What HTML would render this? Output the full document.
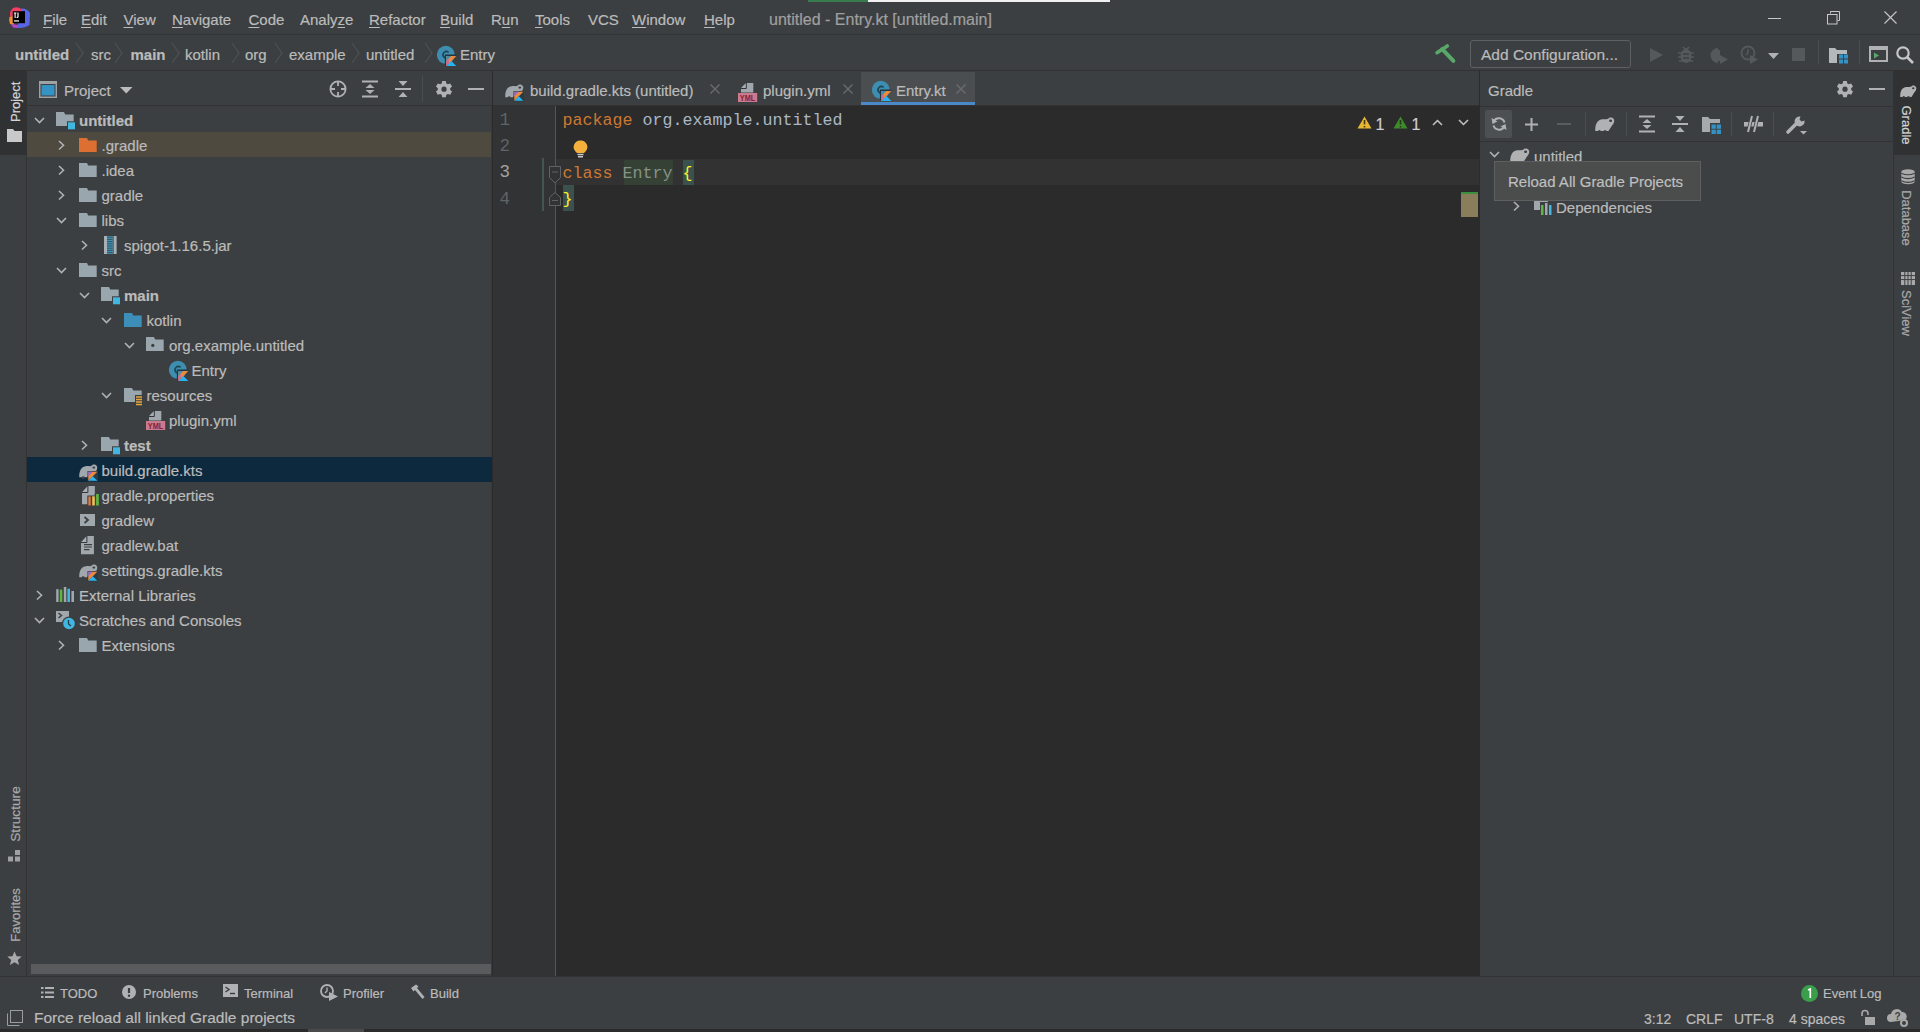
<!DOCTYPE html>
<html><head><meta charset="utf-8">
<style>
*{margin:0;padding:0;box-sizing:border-box}
html,body{width:1920px;height:1032px;overflow:hidden;background:#3c3f41;font-family:"Liberation Sans",sans-serif;font-size:15px;color:#bbbbbb}
.a{position:absolute}
.t{position:absolute;white-space:nowrap;line-height:20px;-webkit-text-stroke:0.2px currentColor}
.b{font-weight:bold}
u{text-decoration-thickness:1px;text-underline-offset:1.5px}
svg{position:absolute;overflow:visible}
.code{position:absolute;font-family:"Liberation Mono",monospace;font-size:16.67px;white-space:pre;line-height:26px}
</style></head><body>
<div class="a" style="left:808px;top:0px;width:60px;height:2px;background:#387b4f;"></div>
<div class="a" style="left:868px;top:0px;width:242px;height:2px;background:#f0f0f0;"></div>
<div class="a" style="left:0px;top:34px;width:1920px;height:1px;background:#323436;"></div>
<svg style="left:7px;top:6px" width="24" height="24" viewBox="0 0 24 24">
 <path d="M6 2 Q12 0 15 4 L13 11 L4 12 Q1 7 6 2Z" fill="#f43f63"/>
 <path d="M2.5 11 L7 10 L7 19 L3 18 Q1.5 14 2.5 11Z" fill="#f0913a"/>
 <path d="M4 18 L12 19 L10 22 L6 21.5Z" fill="#b745c9"/>
 <path d="M14 2.5 Q20 2 23 7 L22.5 19 Q18 22.5 10 22 L14 10Z" fill="#5866e6"/>
 <rect x="5.7" y="5.2" width="12.3" height="12" fill="#000"/>
 <rect x="7" y="14.3" width="5" height="1.3" fill="#e8e8e8"/>
 <path d="M6.8 6.5 h2.6 v1.1 h-0.75 v4.3 h-1.1 v-4.3 h-0.75z M10.4 6.5 h1.2 v3.9 c0 1.3 -0.9 1.7 -2 1.6 v-1.1 c0.6 0 0.8 -0.1 0.8 -0.6z" fill="#fff"/>
</svg>
<div class="t" style="left:43px;top:9.5px;"><u>F</u>ile</div>
<div class="t" style="left:81px;top:9.5px;"><u>E</u>dit</div>
<div class="t" style="left:123.5px;top:9.5px;"><u>V</u>iew</div>
<div class="t" style="left:172px;top:9.5px;"><u>N</u>avigate</div>
<div class="t" style="left:248.5px;top:9.5px;"><u>C</u>ode</div>
<div class="t" style="left:300px;top:9.5px;">Analy<u>z</u>e</div>
<div class="t" style="left:369px;top:9.5px;"><u>R</u>efactor</div>
<div class="t" style="left:440px;top:9.5px;"><u>B</u>uild</div>
<div class="t" style="left:491px;top:9.5px;">R<u>u</u>n</div>
<div class="t" style="left:535px;top:9.5px;"><u>T</u>ools</div>
<div class="t" style="left:588px;top:9.5px;">VCS</div>
<div class="t" style="left:632px;top:9.5px;"><u>W</u>indow</div>
<div class="t" style="left:704px;top:9.5px;"><u>H</u>elp</div>
<div class="t" style="left:769px;top:9.5px;color:#a0a0a0;font-size:16px">untitled - Entry.kt [untitled.main]</div>
<div class="a" style="left:1768px;top:18px;width:13px;height:1px;background:#c8c8c8;"></div>
<svg style="left:1827px;top:11px" width="13" height="14" viewBox="0 0 13 14"><path d="M3.5 2.5 v-2 h9 v9 h-2" fill="none" stroke="#c8c8c8"/><rect x="0.5" y="3.5" width="9.5" height="9.5" fill="none" stroke="#c8c8c8"/></svg>
<svg style="left:1884px;top:11px" width="13" height="13" viewBox="0 0 13 13"><path d="M0.5 0.5 L12.5 12.5 M12.5 0.5 L0.5 12.5" stroke="#c8c8c8" stroke-width="1.1"/></svg>
<div class="a" style="left:0px;top:70px;width:1920px;height:1px;background:#323232;"></div>
<div class="t b" style="left:15px;top:44.5px;">untitled</div>
<div class="t" style="left:91px;top:44.5px;">src</div>
<div class="t b" style="left:130.5px;top:44.5px;">main</div>
<div class="t" style="left:185px;top:44.5px;">kotlin</div>
<div class="t" style="left:245px;top:44.5px;">org</div>
<div class="t" style="left:289px;top:44.5px;">example</div>
<div class="t" style="left:366px;top:44.5px;">untitled</div>
<div class="t" style="left:460px;top:44.5px;">Entry</div>
<svg style="left:74.5px;top:42px" width="9" height="22" viewBox="0 0 9 22"><path d="M1 1 L8 11 L1 21" fill="none" stroke="#4d5052" stroke-width="1.3"/></svg>
<svg style="left:114px;top:42px" width="9" height="22" viewBox="0 0 9 22"><path d="M1 1 L8 11 L1 21" fill="none" stroke="#4d5052" stroke-width="1.3"/></svg>
<svg style="left:171px;top:42px" width="9" height="22" viewBox="0 0 9 22"><path d="M1 1 L8 11 L1 21" fill="none" stroke="#4d5052" stroke-width="1.3"/></svg>
<svg style="left:231px;top:42px" width="9" height="22" viewBox="0 0 9 22"><path d="M1 1 L8 11 L1 21" fill="none" stroke="#4d5052" stroke-width="1.3"/></svg>
<svg style="left:274px;top:42px" width="9" height="22" viewBox="0 0 9 22"><path d="M1 1 L8 11 L1 21" fill="none" stroke="#4d5052" stroke-width="1.3"/></svg>
<svg style="left:350.5px;top:42px" width="9" height="22" viewBox="0 0 9 22"><path d="M1 1 L8 11 L1 21" fill="none" stroke="#4d5052" stroke-width="1.3"/></svg>
<svg style="left:424px;top:42px" width="9" height="22" viewBox="0 0 9 22"><path d="M1 1 L8 11 L1 21" fill="none" stroke="#4d5052" stroke-width="1.3"/></svg>
<svg style="left:437px;top:47px" width="19" height="18" viewBox="0 0 19 18"><circle cx="8.8" cy="7.8" r="9" fill="#3d8eb0"/>
<path d="M11.6 5.4 A3.3 3.3 0 1 0 11.6 10.2" fill="none" stroke="#1f4656" stroke-width="1.6"/>
<path d="M8.6 18.6 V8.2 H19.4" fill="none" stroke="#24343e" stroke-width="1.4"/>
<path d="M9.3 8.9 h10 L9.3 18.9z" fill="#f08a3a"/>
<path d="M9.3 8.9 h5 L9.3 13.9z" fill="#3d8eb0"/>
<path d="M9.3 18.9 L14.3 13.9 L19.3 18.9z" fill="#28b4ef"/>
<path d="M9.3 13.9 L11.8 11.4 L11.8 16.4 L9.3 18.9z" fill="#c86a9a"/></svg>
<svg style="left:1435px;top:44px" width="21" height="20" viewBox="0 0 21 20"><path d="M2 8.7 L12.3 1.9" stroke="#59a869" stroke-width="3.6" stroke-linecap="round"/><path d="M7.2 5.2 L18.4 16.8" stroke="#59a869" stroke-width="4" stroke-linecap="round"/></svg>
<div class="a" style="left:1470px;top:40px;width:161px;height:28px;background:transparent;border:1px solid #5e6162;border-radius:3px"></div>
<div class="t" style="left:1481px;top:45px;font-size:15.5px">Add Configuration...</div>
<svg style="left:1649px;top:47px" width="15" height="16" viewBox="0 0 15 16"><path d="M1 1 L14 8 L1 15Z" fill="#56595b"/></svg>
<svg style="left:1677px;top:44px" width="18" height="20" viewBox="0 0 18 20"><path d="M6 3 L8 5 L10 5 L12 3" stroke="#56595b" stroke-width="1.5" fill="none"/><ellipse cx="9" cy="12" rx="5.5" ry="7" fill="#56595b"/><path d="M1 9 h16 M1 13 h16 M2 17 h14" stroke="#56595b" stroke-width="1.5"/><path d="M6 10 h6 M6 14 h6" stroke="#3c3f41" stroke-width="1.4"/></svg>
<svg style="left:1710px;top:47px" width="19" height="17" viewBox="0 0 19 17"><path d="M8 1 A7.5 7.5 0 1 0 8 16Z" fill="#56595b"/><path d="M9 3 L9 14" stroke="#56595b" stroke-width="2"/><path d="M10 8 L18 12.5 L10 17Z" fill="#56595b"/></svg>
<svg style="left:1740px;top:45px" width="19" height="19" viewBox="0 0 19 19"><circle cx="8" cy="8" r="6.5" fill="none" stroke="#56595b" stroke-width="1.8"/><path d="M8 4 v4 l-2 2" stroke="#56595b" stroke-width="1.5" fill="none"/><path d="M10 10 L18 14.5 L10 19Z" fill="#56595b"/></svg>
<svg style="left:1767.5px;top:52.5px" width="11" height="6" viewBox="0 0 11 6"><path d="M0 0 h11 L5.5 6z" fill="#afb1b3"/></svg>
<div class="a" style="left:1792px;top:48px;width:13px;height:13px;background:#56595b;"></div>
<div class="a" style="left:1818px;top:40px;width:1px;height:24px;background:#4b4e50;"></div>
<svg style="left:1829px;top:48px" width="20" height="16" viewBox="0 0 20 16"><path d="M0 0 h6 l2 2 h10 v13 h-18z" fill="#b4b8bb"/><rect x="8" y="6" width="12" height="10" fill="#3c3f41"/><rect x="10" y="6.5" width="4" height="4" fill="#3592c4"/><rect x="15" y="6.5" width="4" height="4" fill="#3592c4"/><rect x="10" y="11.5" width="4" height="4" fill="#3592c4"/><rect x="15" y="11.5" width="4" height="4" fill="#3592c4"/></svg>
<div class="a" style="left:1859px;top:40px;width:1px;height:24px;background:#4b4e50;"></div>
<svg style="left:1869px;top:46px" width="19" height="16" viewBox="0 0 19 16"><rect x="1" y="1" width="17" height="14" fill="none" stroke="#afb1b3" stroke-width="2"/><rect x="1" y="1" width="17" height="3" fill="#afb1b3"/><path d="M5 6.5 L10 9.5 L5 12.5z" fill="#59a869"/></svg>
<svg style="left:1896px;top:46px" width="18" height="18" viewBox="0 0 18 18"><circle cx="7" cy="7" r="5.7" fill="none" stroke="#c4c6c8" stroke-width="2.2"/><path d="M11 11 L17 17" stroke="#c4c6c8" stroke-width="2.6"/></svg>
<div class="a" style="left:0px;top:71px;width:26px;height:84px;background:#2f3133;"></div>
<div class="a" style="left:26px;top:71px;width:1px;height:905px;background:#323232;"></div>
<div class="t" style="left:-4px;top:92px;width:40px;height:20px;transform:rotate(-90deg);font-size:13px;color:#d4d4d4;text-align:center">Project</div>
<svg style="left:7px;top:129px" width="15" height="13" viewBox="0 0 15 13"><path d="M0 0 h6 l1.5 2 h7.5 v11 h-15z" fill="#c9c9c9"/></svg>
<div class="t" style="left:-19px;top:804px;width:70px;height:20px;transform:rotate(-90deg);font-size:13.7px;color:#a9a9a9;text-align:center">Structure</div>
<svg style="left:8px;top:850px" width="13" height="12" viewBox="0 0 13 12"><rect x="7" y="0" width="5" height="5" fill="#a0a0a0"/><rect x="0" y="6.5" width="5" height="5" fill="#a0a0a0"/><rect x="7" y="6.5" width="5" height="5" fill="#a0a0a0"/></svg>
<div class="t" style="left:-19px;top:905px;width:70px;height:20px;transform:rotate(-90deg);font-size:13px;color:#a9a9a9;text-align:center">Favorites</div>
<svg style="left:7px;top:951px" width="15" height="15" viewBox="0 0 15 15"><path d="M7.5 0.5 L9.6 5.3 L14.7 5.6 L10.8 8.9 L12.1 14 L7.5 11.2 L2.9 14 L4.2 8.9 L0.3 5.6 L5.4 5.3Z" fill="#a9a9a9"/></svg>
<div class="a" style="left:27px;top:105px;width:465px;height:1px;background:#323232;"></div>
<svg style="left:39px;top:81px" width="18" height="17" viewBox="0 0 18 17"><rect x="0.75" y="0.75" width="16.5" height="15.5" fill="none" stroke="#9ea2a5" stroke-width="1.5"/><rect x="0" y="0" width="18" height="3" fill="#9ea2a5"/><rect x="2.5" y="4" width="13" height="10.5" fill="#3592c4"/></svg>
<div class="t" style="left:64px;top:80.5px;">Project</div>
<svg style="left:120px;top:87px" width="13" height="7" viewBox="0 0 13 7"><path d="M0 0 h12.5 L6.25 6.5z" fill="#bbbbbb"/></svg>
<svg style="left:329px;top:80px" width="18" height="18" viewBox="0 0 18 18"><circle cx="9" cy="9" r="7.6" fill="none" stroke="#afb1b3" stroke-width="1.8"/><path d="M9 1 v5 M9 12 v5 M1 9 h5 M12 9 h5" stroke="#afb1b3" stroke-width="1.8"/></svg>
<svg style="left:362px;top:80px" width="16" height="18" viewBox="0 0 16 18"><rect x="0" y="0.5" width="16" height="2" fill="#afb1b3"/><rect x="0" y="15.5" width="16" height="2" fill="#afb1b3"/><path d="M3.5 8 L8 4 L12.5 8z M3.5 10 L8 14 L12.5 10z" fill="#afb1b3"/></svg>
<svg style="left:395px;top:80px" width="16" height="18" viewBox="0 0 16 18"><rect x="0" y="8" width="16" height="2" fill="#afb1b3"/><path d="M3.5 1 L8 6 L12.5 1z M3.5 17 L8 12 L12.5 17z" fill="#afb1b3"/></svg>
<div class="a" style="left:422px;top:76px;width:1px;height:26px;background:#4b4e50;"></div>
<svg style="left:435px;top:80.5px" width="18" height="17" viewBox="0 0 18 17"><path d="M7.2 0 h3.6 l0.5 2.4 l1.6 0.9 l2.3 -0.8 l1.8 3.1 l-1.8 1.6 v1.8 l1.8 1.6 l-1.8 3.1 l-2.3 -0.8 l-1.6 0.9 l-0.5 2.4 h-3.6 l-0.5 -2.4 l-1.6 -0.9 l-2.3 0.8 l-1.8 -3.1 l1.8 -1.6 v-1.8 l-1.8 -1.6 l1.8 -3.1 l2.3 0.8 l1.6 -0.9z" fill="#afb1b3"/><circle cx="9" cy="8.2" r="2.6" fill="#3c3f41"/></svg>
<div class="a" style="left:468px;top:88px;width:16px;height:2px;background:#afb1b3;"></div>
<div class="a" style="left:491px;top:106px;width:1px;height:870px;background:#37393b;"></div>
<svg style="left:33.5px;top:117px" width="11" height="7" viewBox="0 0 11 7"><path d="M1 1 L5.5 5.5 L10 1" fill="none" stroke="#afb1b3" stroke-width="1.6"/></svg>
<svg style="left:56.0px;top:112px" width="20" height="20" viewBox="0 0 20 20"><path d="M0 0 h8 l1.2 2.6 h8.5 v11.4 h-17.7z" fill="#9aa6ae"/><rect x="11" y="9.3" width="8.5" height="8.5" fill="#3c3f41"/><rect x="12" y="10.3" width="7" height="7" fill="#40b6e0"/></svg>
<div class="t b" style="left:79.0px;top:111px;">untitled</div>
<div class="a" style="left:27px;top:132px;width:464px;height:25px;background:#4f4a40;"></div>
<svg style="left:58.25px;top:139.5px" width="7" height="11" viewBox="0 0 7 11"><path d="M1 1 L5.5 5.25 L1 9.5" fill="none" stroke="#afb1b3" stroke-width="1.6"/></svg>
<svg style="left:78.5px;top:137.5px" width="20" height="20" viewBox="0 0 20 20"><path d="M0 0 h8 l1.2 2.6 h8.5 v11.4 h-17.7z" fill="#dd6f33"/></svg>
<div class="t" style="left:101.5px;top:136px;">.gradle</div>
<svg style="left:58.25px;top:164.5px" width="7" height="11" viewBox="0 0 7 11"><path d="M1 1 L5.5 5.25 L1 9.5" fill="none" stroke="#afb1b3" stroke-width="1.6"/></svg>
<svg style="left:78.5px;top:162.5px" width="20" height="20" viewBox="0 0 20 20"><path d="M0 0 h8 l1.2 2.6 h8.5 v11.4 h-17.7z" fill="#9aa6ae"/></svg>
<div class="t" style="left:101.5px;top:161px;">.idea</div>
<svg style="left:58.25px;top:189.5px" width="7" height="11" viewBox="0 0 7 11"><path d="M1 1 L5.5 5.25 L1 9.5" fill="none" stroke="#afb1b3" stroke-width="1.6"/></svg>
<svg style="left:78.5px;top:187.5px" width="20" height="20" viewBox="0 0 20 20"><path d="M0 0 h8 l1.2 2.6 h8.5 v11.4 h-17.7z" fill="#9aa6ae"/></svg>
<div class="t" style="left:101.5px;top:186px;">gradle</div>
<svg style="left:56.0px;top:217px" width="11" height="7" viewBox="0 0 11 7"><path d="M1 1 L5.5 5.5 L10 1" fill="none" stroke="#afb1b3" stroke-width="1.6"/></svg>
<svg style="left:78.5px;top:212.5px" width="20" height="20" viewBox="0 0 20 20"><path d="M0 0 h8 l1.2 2.6 h8.5 v11.4 h-17.7z" fill="#9aa6ae"/></svg>
<div class="t" style="left:101.5px;top:211px;">libs</div>
<svg style="left:80.75px;top:239.5px" width="7" height="11" viewBox="0 0 7 11"><path d="M1 1 L5.5 5.25 L1 9.5" fill="none" stroke="#afb1b3" stroke-width="1.6"/></svg>
<svg style="left:103.5px;top:235.5px" width="20" height="20" viewBox="0 0 20 20"><rect x="0" y="0" width="8.5" height="18" fill="#a8b0b5"/><rect x="3" y="0" width="5.5" height="18" fill="#3f92b4"/><path d="M3 1.2 h5.5 M3 3.4 h5.5 M3 5.6 h5.5 M3 7.8 h5.5 M3 10.0 h5.5 M3 12.2 h5.5 M3 14.4 h5.5 M3 16.6 h5.5" stroke="#2f4550" stroke-width="0.8"/><rect x="9.6" y="0" width="3" height="18" fill="#a8b0b5"/></svg>
<div class="t" style="left:124.0px;top:236px;">spigot-1.16.5.jar</div>
<svg style="left:56.0px;top:267px" width="11" height="7" viewBox="0 0 11 7"><path d="M1 1 L5.5 5.5 L10 1" fill="none" stroke="#afb1b3" stroke-width="1.6"/></svg>
<svg style="left:78.5px;top:262.5px" width="20" height="20" viewBox="0 0 20 20"><path d="M0 0 h8 l1.2 2.6 h8.5 v11.4 h-17.7z" fill="#9aa6ae"/></svg>
<div class="t" style="left:101.5px;top:261px;">src</div>
<svg style="left:78.5px;top:292px" width="11" height="7" viewBox="0 0 11 7"><path d="M1 1 L5.5 5.5 L10 1" fill="none" stroke="#afb1b3" stroke-width="1.6"/></svg>
<svg style="left:101.0px;top:287px" width="20" height="20" viewBox="0 0 20 20"><path d="M0 0 h8 l1.2 2.6 h8.5 v11.4 h-17.7z" fill="#9aa6ae"/><rect x="11" y="9.3" width="8.5" height="8.5" fill="#3c3f41"/><rect x="12" y="10.3" width="7" height="7" fill="#40b6e0"/></svg>
<div class="t b" style="left:124.0px;top:286px;">main</div>
<svg style="left:101.0px;top:317px" width="11" height="7" viewBox="0 0 11 7"><path d="M1 1 L5.5 5.5 L10 1" fill="none" stroke="#afb1b3" stroke-width="1.6"/></svg>
<svg style="left:123.5px;top:312.5px" width="20" height="20" viewBox="0 0 20 20"><path d="M0 0 h8 l1.2 2.6 h8.5 v11.4 h-17.7z" fill="#3d8fba"/></svg>
<div class="t" style="left:146.5px;top:311px;">kotlin</div>
<svg style="left:123.5px;top:342px" width="11" height="7" viewBox="0 0 11 7"><path d="M1 1 L5.5 5.5 L10 1" fill="none" stroke="#afb1b3" stroke-width="1.6"/></svg>
<svg style="left:146.0px;top:337.3px" width="20" height="20" viewBox="0 0 20 20"><path d="M0 0 h8 l1.2 2.6 h8.5 v11.4 h-17.7z" fill="#9aa6ae"/><circle cx="6.8" cy="8.4" r="1.6" fill="#3c3f41"/></svg>
<div class="t" style="left:169.0px;top:336px;">org.example.untitled</div>
<svg style="left:168.5px;top:361.5px" width="20" height="20" viewBox="0 0 20 20"><circle cx="8.8" cy="7.8" r="9" fill="#3d8eb0"/>
<path d="M11.6 5.4 A3.3 3.3 0 1 0 11.6 10.2" fill="none" stroke="#1f4656" stroke-width="1.6"/>
<path d="M8.6 18.6 V8.2 H19.4" fill="none" stroke="#24343e" stroke-width="1.4"/>
<path d="M9.3 8.9 h10 L9.3 18.9z" fill="#f08a3a"/>
<path d="M9.3 8.9 h5 L9.3 13.9z" fill="#3d8eb0"/>
<path d="M9.3 18.9 L14.3 13.9 L19.3 18.9z" fill="#28b4ef"/>
<path d="M9.3 13.9 L11.8 11.4 L11.8 16.4 L9.3 18.9z" fill="#c86a9a"/></svg>
<div class="t" style="left:191.5px;top:361px;">Entry</div>
<svg style="left:101.0px;top:392px" width="11" height="7" viewBox="0 0 11 7"><path d="M1 1 L5.5 5.5 L10 1" fill="none" stroke="#afb1b3" stroke-width="1.6"/></svg>
<svg style="left:123.5px;top:387.5px" width="20" height="20" viewBox="0 0 20 20"><path d="M0 0 h8 l1.2 2.6 h8.5 v11.4 h-17.7z" fill="#9aa6ae"/><rect x="11" y="7" width="8" height="10" fill="#3c3f41"/><path d="M12 9 h6 M12 11.5 h6 M12 14 h6 M12 16.5 h6" stroke="#e6a93d" stroke-width="1.4"/></svg>
<div class="t" style="left:146.5px;top:386px;">resources</div>
<svg style="left:149.0px;top:411px" width="20" height="20" viewBox="0 0 20 20"><path d="M5 0 H12.3 V9.5 H0 V5.2 Z" fill="#a0a8ae"/><path d="M0.4 4.8 L4.8 0.4 V4.8 Z" fill="#a9b0b5"/><path d="M5.3 -0.5 V5.5 H0" fill="none" stroke="#33363a"/><rect x="-3" y="10" width="19.2" height="9" fill="#cc7a8b"/><text x="6.6" y="17.8" font-family="Liberation Sans" font-size="9" font-weight="bold" fill="#86203a" text-anchor="middle" textLength="15.5" lengthAdjust="spacingAndGlyphs">YML</text></svg>
<div class="t" style="left:169.0px;top:411px;">plugin.yml</div>
<svg style="left:80.75px;top:439.5px" width="7" height="11" viewBox="0 0 7 11"><path d="M1 1 L5.5 5.25 L1 9.5" fill="none" stroke="#afb1b3" stroke-width="1.6"/></svg>
<svg style="left:101.0px;top:437px" width="20" height="20" viewBox="0 0 20 20"><path d="M0 0 h8 l1.2 2.6 h8.5 v11.4 h-17.7z" fill="#9aa6ae"/><rect x="11" y="9.3" width="8.5" height="8.5" fill="#3c3f41"/><rect x="12" y="10.3" width="7" height="7" fill="#40b6e0"/></svg>
<div class="t b" style="left:124.0px;top:436px;">test</div>
<div class="a" style="left:27px;top:457px;width:465px;height:25px;background:#0d293e;"></div>
<svg style="left:78.5px;top:462.5px" width="20" height="20" viewBox="0 0 20 20"><g transform="translate(0,1) scale(0.95)"><path d="M0.3 14 C0 9 1.5 3 7 2.3 C10 2 12 2.6 13.2 1.8 C14.2 0.3 17.5 -0.3 19 2.5 C19.8 4.5 18.5 7 17 8.5 L13.5 14 Z" fill="#a0a8ae"/><ellipse cx="15.6" cy="3.7" rx="1.5" ry="1.2" fill="#3c3f41"/><circle cx="4.4" cy="14.5" r="1.5" fill="#3c3f41"/><circle cx="10" cy="14.5" r="1.5" fill="#3c3f41"/></g><rect x="8.5" y="8" width="10.5" height="10.5" fill="#2b3a44"/><path d="M9.3 8.8 h9 L9.3 17.8z" fill="#f08a3a"/><path d="M9.3 8.8 h4.5 L9.3 13.3z" fill="#8b6cd8"/><path d="M9.3 17.8 L13.8 13.3 L18.3 17.8z" fill="#28b4ef"/></svg>
<div class="t" style="left:101.5px;top:461px;">build.gradle.kts</div>
<svg style="left:81.5px;top:485.5px" width="20" height="20" viewBox="0 0 20 20"><path d="M6 0 H12.9 V18.3 H0 V6.5 Z" fill="#a0a8ae"/><path d="M0.4 6 L5.4 0.6 V6 Z" fill="#a9b0b5"/><path d="M5.9 0 V6.5 H0" fill="none" stroke="#33363a" stroke-width="1"/><rect x="5.3" y="9.5" width="12.8" height="10" fill="#3c3f41"/><rect x="6.4" y="10.5" width="2.3" height="9" fill="#e97a3b"/><rect x="10.2" y="10.3" width="2.6" height="9.2" fill="#eec050"/><rect x="14.1" y="8" width="2.7" height="11.5" fill="#62b543"/><path d="M13.3 8 V9.5" stroke="#3c3f41" stroke-width="1.5"/></svg>
<div class="t" style="left:101.5px;top:486px;">gradle.properties</div>
<svg style="left:80.0px;top:514px" width="20" height="20" viewBox="0 0 20 20"><rect x="0" y="0" width="15" height="12" fill="#a0a8ae"/><path d="M4.5 3 L8 6 L4.5 9" fill="none" stroke="#3c3f41" stroke-width="1.8"/></svg>
<div class="t" style="left:101.5px;top:511px;">gradlew</div>
<svg style="left:80.8px;top:535.9px" width="20" height="20" viewBox="0 0 20 20"><path d="M6 0 H12.9 V18.3 H0 V6.5 Z" fill="#a0a8ae"/><path d="M0.4 6 L5.4 0.6 V6 Z" fill="#a9b0b5"/><path d="M5.9 0 V6.5 H0" fill="none" stroke="#33363a" stroke-width="1"/><path d="M3 8.6 h8 M3 11 h8 M3 13.6 h5.5" stroke="#3c3f41" stroke-width="1.1"/></svg>
<div class="t" style="left:101.5px;top:536px;">gradlew.bat</div>
<svg style="left:78.5px;top:562.5px" width="20" height="20" viewBox="0 0 20 20"><g transform="translate(0,1) scale(0.95)"><path d="M0.3 14 C0 9 1.5 3 7 2.3 C10 2 12 2.6 13.2 1.8 C14.2 0.3 17.5 -0.3 19 2.5 C19.8 4.5 18.5 7 17 8.5 L13.5 14 Z" fill="#a0a8ae"/><ellipse cx="15.6" cy="3.7" rx="1.5" ry="1.2" fill="#3c3f41"/><circle cx="4.4" cy="14.5" r="1.5" fill="#3c3f41"/><circle cx="10" cy="14.5" r="1.5" fill="#3c3f41"/></g><rect x="8.5" y="8" width="10.5" height="10.5" fill="#2b3a44"/><path d="M9.3 8.8 h9 L9.3 17.8z" fill="#f08a3a"/><path d="M9.3 8.8 h4.5 L9.3 13.3z" fill="#8b6cd8"/><path d="M9.3 17.8 L13.8 13.3 L18.3 17.8z" fill="#28b4ef"/></svg>
<div class="t" style="left:101.5px;top:561px;">settings.gradle.kts</div>
<svg style="left:35.75px;top:589.5px" width="7" height="11" viewBox="0 0 7 11"><path d="M1 1 L5.5 5.25 L1 9.5" fill="none" stroke="#afb1b3" stroke-width="1.6"/></svg>
<svg style="left:56.0px;top:586.5px" width="20" height="20" viewBox="0 0 20 20"><rect x="0.2" y="2.2" width="2.4" height="12.8" fill="#a0a8ae"/><rect x="3.8" y="2.6" width="2.5" height="12.4" fill="#62b543"/><rect x="7.8" y="0" width="2.5" height="15" fill="#a0a8ae"/><rect x="11.4" y="1.8" width="2.6" height="13.2" fill="#40b6e0"/><rect x="15.4" y="4" width="2.6" height="11" fill="#a0a8ae"/></svg>
<div class="t" style="left:79.0px;top:586px;">External Libraries</div>
<svg style="left:33.5px;top:617px" width="11" height="7" viewBox="0 0 11 7"><path d="M1 1 L5.5 5.5 L10 1" fill="none" stroke="#afb1b3" stroke-width="1.6"/></svg>
<svg style="left:56.0px;top:611px" width="20" height="20" viewBox="0 0 20 20"><rect x="0" y="0" width="13" height="11" fill="#a0a8ae"/><path d="M2.5 2 L5.5 4.5 L2.5 7" fill="none" stroke="#3c3f41" stroke-width="1.5"/><circle cx="13" cy="12.5" r="7" fill="#3c3f41"/><circle cx="13" cy="12.5" r="5.8" fill="#40b6e0"/><path d="M12.5 9 v4 l2.5 2" fill="none" stroke="#1d3f4f" stroke-width="1.3"/></svg>
<div class="t" style="left:79.0px;top:611px;">Scratches and Consoles</div>
<svg style="left:58.25px;top:639.5px" width="7" height="11" viewBox="0 0 7 11"><path d="M1 1 L5.5 5.25 L1 9.5" fill="none" stroke="#afb1b3" stroke-width="1.6"/></svg>
<svg style="left:78.5px;top:637.5px" width="20" height="20" viewBox="0 0 20 20"><path d="M0 0 h8 l1.2 2.6 h8.5 v11.4 h-17.7z" fill="#9aa6ae"/></svg>
<div class="t" style="left:101.5px;top:636px;">Extensions</div>
<div class="a" style="left:31px;top:964px;width:460px;height:10px;background:#595b5d;"></div>
<div class="a" style="left:492px;top:71px;width:1px;height:905px;background:#2b2b2b;"></div>
<div class="a" style="left:861px;top:72px;width:114px;height:34px;background:#4b4e50;"></div>
<div class="a" style="left:861px;top:102px;width:114px;height:4px;background:#4a88c7;"></div>
<svg style="left:504.5px;top:82.5px" width="20" height="20" viewBox="0 0 20 20"><g transform="translate(0,1) scale(0.95)"><path d="M0.3 14 C0 9 1.5 3 7 2.3 C10 2 12 2.6 13.2 1.8 C14.2 0.3 17.5 -0.3 19 2.5 C19.8 4.5 18.5 7 17 8.5 L13.5 14 Z" fill="#a0a8ae"/><ellipse cx="15.6" cy="3.7" rx="1.5" ry="1.2" fill="#3c3f41"/><circle cx="4.4" cy="14.5" r="1.5" fill="#3c3f41"/><circle cx="10" cy="14.5" r="1.5" fill="#3c3f41"/></g><rect x="8.5" y="8" width="10.5" height="10.5" fill="#2b3a44"/><path d="M9.3 8.8 h9 L9.3 17.8z" fill="#f08a3a"/><path d="M9.3 8.8 h4.5 L9.3 13.3z" fill="#8b6cd8"/><path d="M9.3 17.8 L13.8 13.3 L18.3 17.8z" fill="#28b4ef"/></svg>
<div class="t" style="left:530px;top:80.5px;">build.gradle.kts (untitled)</div>
<svg style="left:709.5px;top:84px" width="10" height="10" viewBox="0 0 10 10"><path d="M0.5 0.5 L9.5 9.5 M9.5 0.5 L0.5 9.5" stroke="#6a6c6e" stroke-width="1.3"/></svg>
<svg style="left:741px;top:83px" width="20" height="20" viewBox="0 0 20 20"><path d="M5 0 H12.3 V9.5 H0 V5.2 Z" fill="#a0a8ae"/><path d="M0.4 4.8 L4.8 0.4 V4.8 Z" fill="#a9b0b5"/><path d="M5.3 -0.5 V5.5 H0" fill="none" stroke="#33363a"/><rect x="-3" y="10" width="19.2" height="9" fill="#cc7a8b"/><text x="6.6" y="17.8" font-family="Liberation Sans" font-size="9" font-weight="bold" fill="#86203a" text-anchor="middle" textLength="15.5" lengthAdjust="spacingAndGlyphs">YML</text></svg>
<div class="t" style="left:763px;top:80.5px;">plugin.yml</div>
<svg style="left:843px;top:84px" width="10" height="10" viewBox="0 0 10 10"><path d="M0.5 0.5 L9.5 9.5 M9.5 0.5 L0.5 9.5" stroke="#6a6c6e" stroke-width="1.3"/></svg>
<svg style="left:872px;top:82px" width="20" height="20" viewBox="0 0 20 20"><circle cx="8.8" cy="7.8" r="9" fill="#3d8eb0"/>
<path d="M11.6 5.4 A3.3 3.3 0 1 0 11.6 10.2" fill="none" stroke="#1f4656" stroke-width="1.6"/>
<path d="M8.6 18.6 V8.2 H19.4" fill="none" stroke="#24343e" stroke-width="1.4"/>
<path d="M9.3 8.9 h10 L9.3 18.9z" fill="#f08a3a"/>
<path d="M9.3 8.9 h5 L9.3 13.9z" fill="#3d8eb0"/>
<path d="M9.3 18.9 L14.3 13.9 L19.3 18.9z" fill="#28b4ef"/>
<path d="M9.3 13.9 L11.8 11.4 L11.8 16.4 L9.3 18.9z" fill="#c86a9a"/></svg>
<div class="t" style="left:896px;top:80.5px;">Entry.kt</div>
<svg style="left:955.5px;top:84px" width="10" height="10" viewBox="0 0 10 10"><path d="M0.5 0.5 L9.5 9.5 M9.5 0.5 L0.5 9.5" stroke="#6a6c6e" stroke-width="1.3"/></svg>
<div class="a" style="left:493px;top:105px;width:986px;height:1px;background:#323232;"></div>
<div class="a" style="left:493px;top:106px;width:986px;height:870px;background:#2b2b2b;"></div>
<div class="a" style="left:493px;top:106px;width:62px;height:870px;background:#313335;"></div>
<div class="a" style="left:555px;top:106px;width:1px;height:870px;background:#555555;"></div>
<div class="a" style="left:556px;top:158.5px;width:923px;height:26.5px;background:#323232;"></div>
<div class="a" style="left:493px;top:158.5px;width:62px;height:26.5px;background:#313335;"></div>
<div class="a" style="left:542px;top:158px;width:2px;height:53px;background:#45554f;"></div>
<div class="code" style="left:499.5px;top:106.5px;color:#606366;font-size:17.5px">1</div>
<div class="code" style="left:499.5px;top:132.9px;color:#606366;font-size:17.5px">2</div>
<div class="code" style="left:499.5px;top:159.3px;color:#a4a3a3;font-size:17.5px">3</div>
<div class="code" style="left:499.5px;top:185.7px;color:#606366;font-size:17.5px">4</div>
<div class="code" style="left:562.5px;top:108px"><span style="color:#cc7832">package</span> <span style="color:#a9b7c6">org.example.untitled</span></div>
<div class="a" style="left:623.5px;top:159.5px;width:49.5px;height:25px;background:#344134;"></div>
<div class="a" style="left:682.5px;top:159.5px;width:11px;height:25px;background:#3b514d;"></div>
<div class="a" style="left:563px;top:185px;width:10.5px;height:26px;background:#3b514d;"></div>
<div class="code" style="left:562.5px;top:160.5px"><span style="color:#cc7832">class</span> <span style="color:#879287">Entry</span> <span style="color:#ffef28">{</span></div>
<div class="code" style="left:562.5px;top:187px"><span style="color:#ffef28">}</span></div>
<svg style="left:549px;top:166px" width="13" height="18" viewBox="0 0 13 18"><path d="M0.5 0.5 h11 v11 L6 17 L0.5 11.5z" fill="#313335" stroke="#606366"/><path d="M3 6 h6" stroke="#606366"/></svg>
<svg style="left:549px;top:192px" width="13" height="14" viewBox="0 0 13 14"><path d="M0.5 13.5 h11 v-8 L6 0.5 L0.5 5.5z" fill="#313335" stroke="#606366"/><path d="M3 8.5 h6" stroke="#606366"/></svg>
<svg style="left:573px;top:140px" width="15" height="18" viewBox="0 0 15 18"><path d="M7.5 0.5 A6.5 6.5 0 0 1 12.5 11.5 L11 13 h-7 L2.5 11.5 A6.5 6.5 0 0 1 7.5 0.5z" fill="#f4af3d"/><path d="M4.5 14.5 h6 M5 16.8 h5" stroke="#c9c9c9" stroke-width="1.4"/></svg>
<svg style="left:1356.5px;top:115.5px" width="15" height="14" viewBox="0 0 15 14"><path d="M7.5 0.5 L14.5 12.5 H0.5z" fill="#e6b731"/><path d="M7.5 4 v4.5 M7.5 10 v1.5" stroke="#4a3a10" stroke-width="1.6"/></svg>
<div class="t" style="left:1375.5px;top:114.5px;font-size:16px;color:#d0d0d0">1</div>
<svg style="left:1392.5px;top:115.5px" width="15" height="14" viewBox="0 0 15 14"><path d="M7.5 0.5 L14.5 12.5 H0.5z" fill="#3f8a2c"/><path d="M7.5 4 v4.5 M7.5 10 v1.5" stroke="#1e3d17" stroke-width="1.6"/></svg>
<div class="t" style="left:1411.5px;top:114.5px;font-size:16px;color:#d0d0d0">1</div>
<svg style="left:1432px;top:119px" width="11" height="7" viewBox="0 0 11 7"><path d="M1 6 L5.5 1.5 L10 6" fill="none" stroke="#c4c4c4" stroke-width="1.5"/></svg>
<svg style="left:1458px;top:119px" width="11" height="7" viewBox="0 0 11 7"><path d="M1 1 L5.5 5.5 L10 1" fill="none" stroke="#c4c4c4" stroke-width="1.5"/></svg>
<div class="a" style="left:1461px;top:192px;width:17px;height:2px;background:#3c8f3c;"></div>
<div class="a" style="left:1461px;top:194px;width:17px;height:23px;background:#8a7d5c;"></div>
<div class="a" style="left:1479px;top:71px;width:1px;height:905px;background:#2b2b2b;"></div>
<div class="t" style="left:1488px;top:80.5px;">Gradle</div>
<svg style="left:1836px;top:80.5px" width="18" height="17" viewBox="0 0 18 17"><path d="M7.2 0 h3.6 l0.5 2.4 l1.6 0.9 l2.3 -0.8 l1.8 3.1 l-1.8 1.6 v1.8 l1.8 1.6 l-1.8 3.1 l-2.3 -0.8 l-1.6 0.9 l-0.5 2.4 h-3.6 l-0.5 -2.4 l-1.6 -0.9 l-2.3 0.8 l-1.8 -3.1 l1.8 -1.6 v-1.8 l-1.8 -1.6 l1.8 -3.1 l2.3 0.8 l1.6 -0.9z" fill="#afb1b3"/><circle cx="9" cy="8.2" r="2.6" fill="#3c3f41"/></svg>
<div class="a" style="left:1869px;top:88px;width:16px;height:2px;background:#afb1b3;"></div>
<div class="a" style="left:1480px;top:106px;width:413px;height:1px;background:#323232;"></div>
<div class="a" style="left:1485px;top:110px;width:27px;height:27.5px;background:#4c5052;border-radius:2px"></div>
<svg style="left:1491px;top:116px" width="16" height="16" viewBox="0 0 16 16"><path d="M13.5 6.5 A6 6 0 0 0 2.5 5.5" fill="none" stroke="#afb1b3" stroke-width="2"/><path d="M0.5 2 L1.5 8 L6.5 5.5z" fill="#afb1b3"/><path d="M2.5 9.5 A6 6 0 0 0 13.5 10.5" fill="none" stroke="#afb1b3" stroke-width="2"/><path d="M15.5 14 L14.5 8 L9.5 10.5z" fill="#afb1b3"/></svg>
<svg style="left:1524.5px;top:117.5px" width="13" height="13" viewBox="0 0 13 13"><path d="M6.5 0 v13 M0 6.5 h13" stroke="#afb1b3" stroke-width="2"/></svg>
<div class="a" style="left:1557px;top:123px;width:14px;height:2px;background:#5a5d5f;"></div>
<div class="a" style="left:1584.5px;top:112px;width:1px;height:24px;background:#4b4e50;"></div>
<svg style="left:1595px;top:116.5px" width="20" height="15" viewBox="0 0 20 15"><path d="M0.3 14 C0 9 1.5 3 7 2.3 C10 2 12 2.6 13.2 1.8 C14.2 0.3 17.5 -0.3 19 2.5 C19.8 4.5 18.5 7 17 8.5 L13.5 14 Z" fill="#afb1b3"/><ellipse cx="15.6" cy="3.7" rx="1.5" ry="1.2" fill="#3c3f41"/><circle cx="4.4" cy="14.5" r="1.5" fill="#3c3f41"/><circle cx="10" cy="14.5" r="1.5" fill="#3c3f41"/></svg>
<div class="a" style="left:1625.5px;top:112px;width:1px;height:24px;background:#4b4e50;"></div>
<svg style="left:1638.5px;top:115px" width="16" height="18" viewBox="0 0 16 18"><rect x="0" y="0.5" width="16" height="2" fill="#afb1b3"/><rect x="0" y="15.5" width="16" height="2" fill="#afb1b3"/><path d="M3.5 8 L8 4 L12.5 8z M3.5 10 L8 14 L12.5 10z" fill="#afb1b3"/></svg>
<svg style="left:1671.5px;top:115px" width="16" height="18" viewBox="0 0 16 18"><rect x="0" y="8" width="16" height="2" fill="#afb1b3"/><path d="M3.5 1 L8 6 L12.5 1z M3.5 17 L8 12 L12.5 17z" fill="#afb1b3"/></svg>
<svg style="left:1702px;top:116.5px" width="20" height="18" viewBox="0 0 20 18"><path d="M0 0 h6 l2 2 h10 v13 h-18z" fill="#a6aaad"/><rect x="8" y="6" width="12" height="12" fill="#3c3f41"/><rect x="9.5" y="7.5" width="4.3" height="4.3" fill="#3592c4"/><rect x="14.7" y="7.5" width="4.3" height="4.3" fill="#3592c4"/><rect x="9.5" y="12.7" width="4.3" height="4.3" fill="#3592c4"/><rect x="14.7" y="12.7" width="4.3" height="4.3" fill="#3592c4"/></svg>
<div class="a" style="left:1731px;top:112px;width:1px;height:24px;background:#4b4e50;"></div>
<svg style="left:1744px;top:115px" width="19" height="18" viewBox="0 0 19 18"><rect x="0" y="7" width="19" height="4.5" fill="#afb1b3"/><path d="M8 1 L4 17 M14 1 L10 17" stroke="#3c3f41" stroke-width="3.5"/><path d="M8 1 L4 17 M14 1 L10 17" stroke="#afb1b3" stroke-width="2"/></svg>
<div class="a" style="left:1773px;top:112px;width:1px;height:24px;background:#4b4e50;"></div>
<svg style="left:1786px;top:115.5px" width="21" height="20" viewBox="0 0 21 20"><path d="M2 16 L10 8" stroke="#afb1b3" stroke-width="3.6" stroke-linecap="round"/><path d="M14.5 0.5 A5 5 0 1 0 18.5 4.5 L15.5 5.5 L13.5 3.5z" fill="#afb1b3"/><path d="M14 15 h7 L17.5 18.5z" fill="#afb1b3"/></svg>
<div class="a" style="left:1480px;top:141px;width:413px;height:1px;background:#323232;"></div>
<svg style="left:1489px;top:151px" width="11" height="7" viewBox="0 0 11 7"><path d="M1 1 L5.5 5.5 L10 1" fill="none" stroke="#afb1b3" stroke-width="1.6"/></svg>
<svg style="left:1510px;top:148px" width="20" height="15" viewBox="0 0 20 15"><path d="M0.3 14 C0 9 1.5 3 7 2.3 C10 2 12 2.6 13.2 1.8 C14.2 0.3 17.5 -0.3 19 2.5 C19.8 4.5 18.5 7 17 8.5 L13.5 14 Z" fill="#afb1b3"/><ellipse cx="15.6" cy="3.7" rx="1.5" ry="1.2" fill="#3c3f41"/><circle cx="4.4" cy="14.5" r="1.5" fill="#3c3f41"/><circle cx="10" cy="14.5" r="1.5" fill="#3c3f41"/></svg>
<div class="t" style="left:1534px;top:146.5px;">untitled</div>
<svg style="left:1512.5px;top:201px" width="7" height="11" viewBox="0 0 7 11"><path d="M1 1 L5.5 5.25 L1 9.5" fill="none" stroke="#afb1b3" stroke-width="1.6"/></svg>
<svg style="left:1534px;top:199px" width="20" height="16" viewBox="0 0 20 16"><rect x="0" y="0" width="14" height="11" fill="#a0a8ae"/><rect x="6" y="3" width="14" height="14" fill="#3c3f41"/><rect x="7" y="6" width="2.5" height="10" fill="#62b543"/><rect x="11" y="4" width="2.5" height="12" fill="#a0a8ae"/><rect x="15" y="6" width="2.5" height="10" fill="#40b6e0"/></svg>
<div class="t" style="left:1556px;top:198px;">Dependencies</div>
<div class="a" style="left:1494px;top:161px;width:207px;height:39.5px;background:#4b4d4d;border:1px solid #5e6060"></div>
<div class="t" style="left:1508px;top:171.5px;color:#bfbfbf">Reload All Gradle Projects</div>
<div class="a" style="left:1893px;top:71px;width:1px;height:905px;background:#323232;"></div>
<div class="a" style="left:1894px;top:71px;width:26px;height:84px;background:#2f3133;"></div>
<svg style="left:1900px;top:85px" width="17" height="13" viewBox="0 0 17 13"><g transform="scale(0.85)"><path d="M0.3 14 C0 9 1.5 3 7 2.3 C10 2 12 2.6 13.2 1.8 C14.2 0.3 17.5 -0.3 19 2.5 C19.8 4.5 18.5 7 17 8.5 L13.5 14 Z" fill="#afb1b3"/><ellipse cx="15.6" cy="3.7" rx="1.5" ry="1.2" fill="#3c3f41"/><circle cx="4.4" cy="14.5" r="1.5" fill="#3c3f41"/><circle cx="10" cy="14.5" r="1.5" fill="#3c3f41"/></g></svg>
<div class="t" style="left:1886px;top:115px;width:40px;height:20px;transform:rotate(90deg);font-size:13px;color:#d4d4d4;text-align:center">Gradle</div>
<svg style="left:1901px;top:168.5px" width="14" height="16" viewBox="0 0 14 16"><rect x="0.3" y="0.3" width="13.4" height="15" rx="6.7" ry="2.6" fill="#a9a9a9"/><path d="M0.3 4.2 Q7 7.4 13.7 4.2 M0.3 8 Q7 11.2 13.7 8 M0.3 11.8 Q7 15 13.7 11.8" fill="none" stroke="#3c3f41" stroke-width="1.1"/></svg>
<div class="t" style="left:1870px;top:208px;width:72px;height:20px;transform:rotate(90deg);font-size:13px;color:#a9a9a9;text-align:center">Database</div>
<svg style="left:1901px;top:272px" width="14" height="13" viewBox="0 0 14 13"><rect x="0" y="0" width="14" height="13" fill="#a9a9a9"/><path d="M3.8 0 V13 M7 0 V13 M10.2 0 V13 M0 3.6 H14 M0 7.6 H14" stroke="#3c3f41" stroke-width="1"/></svg>
<div class="t" style="left:1870px;top:302.5px;width:72px;height:20px;transform:rotate(90deg);font-size:13px;color:#a9a9a9;text-align:center">SciView</div>
<div class="a" style="left:0px;top:976px;width:1920px;height:1px;background:#323232;"></div>
<svg style="left:41px;top:986px" width="13" height="13" viewBox="0 0 13 13"><path d="M0 1 h2.5 v2 h-2.5z M4 1 h9 v2 h-9z M0 5.5 h2.5 v2 h-2.5z M4 5.5 h9 v2 h-9z M0 10 h2.5 v2 h-2.5z M4 10 h9 v2 h-9z" fill="#afb1b3"/></svg>
<div class="t" style="left:60px;top:983.5px;font-size:13px">TODO</div>
<svg style="left:122px;top:985px" width="14" height="14" viewBox="0 0 14 14"><circle cx="7" cy="7" r="7" fill="#afb1b3"/><path d="M7 3 v5" stroke="#3c3f41" stroke-width="2.2"/><circle cx="7" cy="10.7" r="1.2" fill="#3c3f41"/></svg>
<div class="t" style="left:143px;top:983.5px;font-size:13px">Problems</div>
<svg style="left:223px;top:984px" width="15" height="13" viewBox="0 0 15 13"><rect x="0" y="0" width="15" height="13" fill="#afb1b3"/><path d="M2.5 3 L6 5.5 L2.5 8" fill="none" stroke="#3c3f41" stroke-width="1.4"/><path d="M7 9.5 h5" stroke="#3c3f41" stroke-width="1.4"/></svg>
<div class="t" style="left:244px;top:983.5px;font-size:13px">Terminal</div>
<svg style="left:320px;top:984px" width="19" height="17" viewBox="0 0 19 17"><circle cx="7" cy="7" r="6" fill="none" stroke="#afb1b3" stroke-width="1.8"/><path d="M7 3.5 v3.5 l-2 2" stroke="#afb1b3" stroke-width="1.4" fill="none"/><path d="M9 8 L18 12.5 L9 17z" fill="#afb1b3"/></svg>
<div class="t" style="left:343px;top:983.5px;font-size:13px">Profiler</div>
<svg style="left:409px;top:984px" width="16" height="16" viewBox="0 0 16 16"><path d="M2 4 L7 0.5 L9.5 2.5 L8 4 L15.5 13 L13.5 15 L6 6 L4.5 7.5 Z" fill="#afb1b3"/></svg>
<div class="t" style="left:430px;top:983.5px;font-size:13px">Build</div>
<svg style="left:1801px;top:985px" width="17" height="17" viewBox="0 0 17 17"><circle cx="8.5" cy="8.5" r="8.5" fill="#3b9e4a"/><path d="M7 5 L9.3 4 V13" stroke="#fff" stroke-width="1.6" fill="none"/></svg>
<div class="t" style="left:1823px;top:983.5px;font-size:13px">Event Log</div>
<svg style="left:7px;top:1010px" width="16" height="16" viewBox="0 0 16 16"><rect x="3.5" y="0.5" width="12" height="12" fill="none" stroke="#9a9c9e"/><path d="M0.5 3.5 v12 h12" fill="none" stroke="#9a9c9e"/></svg>
<div class="t" style="left:34px;top:1008px;font-size:15.5px">Force reload all linked Gradle projects</div>
<div class="t" style="left:1644px;top:1008.5px;font-size:14px">3:12</div>
<div class="t" style="left:1686px;top:1008.5px;font-size:14px">CRLF</div>
<div class="t" style="left:1734px;top:1008.5px;font-size:14px">UTF-8</div>
<div class="t" style="left:1789px;top:1008.5px;font-size:14px">4 spaces</div>
<svg style="left:1860px;top:1010px" width="15" height="16" viewBox="0 0 15 16"><path d="M2 6 V3.5 A3 3 0 0 1 8 3.5 V5" fill="none" stroke="#a9a9a9" stroke-width="1.6"/><rect x="5" y="7" width="10" height="8" fill="#a9a9a9"/></svg>
<svg style="left:1888px;top:1008px" width="22" height="20" viewBox="0 0 22 20"><path d="M3 14 A4 4 0 0 1 3 6 A6 6 0 0 1 14 4 A4.5 4.5 0 0 1 17 12" fill="#a9a9a9"/><text x="9.5" y="12" font-family="Liberation Sans" font-weight="bold" font-size="10" fill="#3c3f41" text-anchor="middle">?</text><circle cx="16" cy="15" r="3.8" fill="#3c3f41"/><circle cx="16" cy="15" r="3" fill="none" stroke="#a9a9a9" stroke-width="2"/></svg>
<div class="a" style="left:0px;top:1029px;width:1920px;height:3px;background:#2b2b2b;"></div>
<div class="a" style="left:308px;top:1029px;width:56px;height:3px;background:#4a4a4a;"></div>
</body></html>
